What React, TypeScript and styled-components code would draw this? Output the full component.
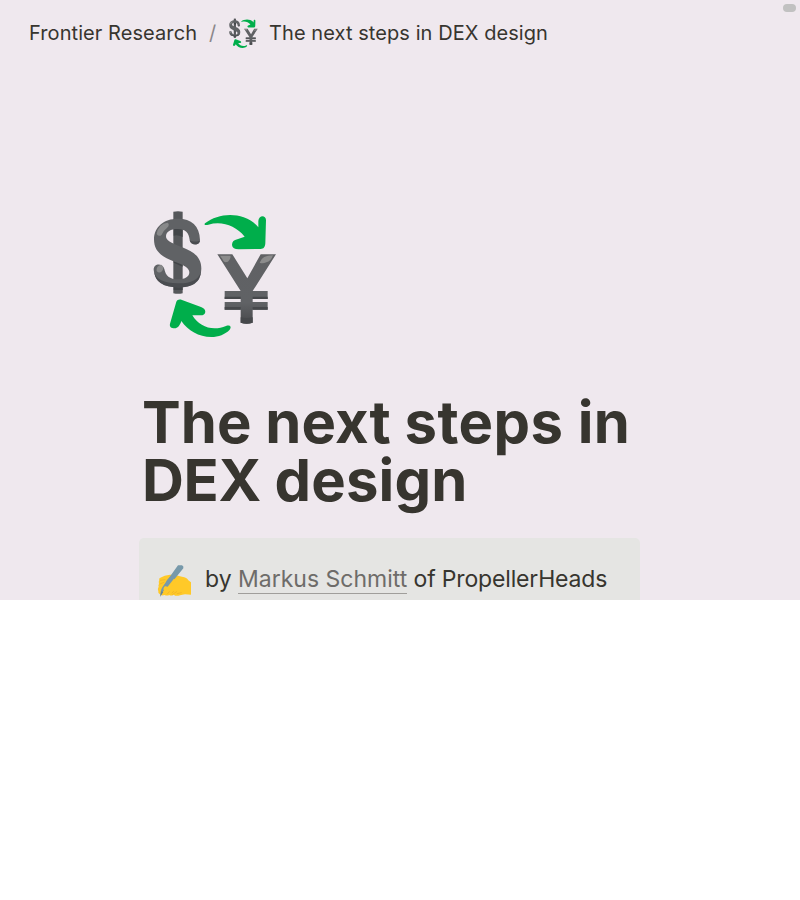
import React from "react";
import styled, { createGlobalStyle } from "styled-components";

const GlobalStyle = createGlobalStyle`
  * { box-sizing: border-box; }
  body { margin: 0; background: #fff; font-family: Inter, sans-serif; color: #37352f; }
`;

const Page = styled.main`
  position: relative;
  width: 800px;
  height: 600px;
  overflow: hidden;
  background: #efe8ee;
`;

const ScrollThumb = styled.div`
  position: absolute;
  top: 4px;
  right: 4px;
  width: 13px;
  height: 8px;
  border-radius: 4px;
  background: #c1c1c1;
`;

const Breadcrumb = styled.nav`
  display: flex;
  align-items: center;
  height: 66px;
  padding-left: 29px;
  font-size: 20px;
  line-height: 24px;
  white-space: nowrap;
`;

const Crumb = styled.span<{ $width: number }>`
  width: ${({ $width }) => $width}px;
  letter-spacing: 0.075px;
`;

const Slash = styled.span`
  width: 18px;
  margin: 0 0 0 12px;
  color: #8b878a;
`;

const CrumbIcon = styled.span`
  display: flex;
  width: 43px;
  margin-left: -1px;
`;

const Content = styled.article`
  width: 501px;
  margin: 134px 0 0 139px;
`;

const Cover = styled.div`
  height: 150px;
  padding-left: 1px;
`;

const Title = styled.h1`
  margin: 43px 0 29px 3px;
  font-size: 58px;
  line-height: 58px;
  font-weight: 700;
  white-space: nowrap;
`;

const TitleWords = styled.span<{ $tracking: number }>`
  letter-spacing: ${({ $tracking }) => $tracking}px;
`;

const Callout = styled.section`
  display: flex;
  align-items: flex-start;
  height: 100px;
  padding: 24px 0 0 18px;
  border-radius: 5px;
  background: #e5e5e3;
`;

const CalloutText = styled.p`
  margin: 0 0 0 12px;
  font-size: 23px;
  line-height: 34px;
  white-space: nowrap;
`;

const Affiliation = styled.span`
  letter-spacing: -0.17px;
`;

const AuthorLink = styled.a`
  display: inline-block;
  height: 32px;
  color: #6e6c69;
  border-bottom: 1px solid #a09e9b;
`;

function CurrencyIcon({ size, id }: { size: number; id: string }) {
  return (
    <svg width={size} height={size} viewBox="0 0 450 450" aria-hidden="true">
      <defs>
        <linearGradient id={id} x1="0" y1="0" x2="0" y2="1">
          <stop offset="0" stopColor="#606164" />
          <stop offset=".7" stopColor="#606265" />
          <stop offset="1" stopColor="#48494c" />
        </linearGradient>
      </defs>
      <path d="M100 35q14-3 28 0v245q-14 3-28 0z" fill="#55575a" />
      <path d="M101 82h27v29q-14-7-27-4zm0 75 27 12v31l-27-12zm0 100h27v13h-27z" fill="#424548" />
      <path d="M180 120C179 77 154 56 114 56c-43 0-72 25-72 62 0 38 25 53 62 67 29 11 44 19 44 32 0 13-12 21-33 21-27 0-38-11-42-31-5-19-32-18-32 2 2 34 29 53 74 53 44 0 69-20 69-56 0-36-24-51-59-65-34-13-47-20-47-32 0-14 14-22 35-22 23 0 34 11 36 33 2 18 31 18 31 0z" fill="#606265" />
      <path d="M43 216q7 33 70 34 60 1 70-35-3 47-68 47-68 0-72-46zM149 121q10 7 31 1-2 11-15 11-12-1-16-12z" fill="#4a4c50" />
      <path d="M50 102q5-31 33-34 8 6-3 17-12 9-15 19-8 8-15-2zm0 111q-2-16 14-19 11 8 2 20-9 8-16-1z" fill="#88898a" />
      <path d="M232 163h45l45 72 40-72h46l-70 110h45v24h-45v9h45v23h-45v39q-18 6-36 0v-39h-48v-23h48v-9h-48v-24h48z" fill={`url(#${id})`} />
      <path d="M254 290h48v7h-48zm84 0h45v7h-45zm-84 31h48v8h-48zm84 0h45v8h-45zM302 352q18 4 36 0v16q-18 6-36 0z" fill="#46484b" />
      <path d="M240 167h31q3 8-7 18-13 5-17-8zm119 21q7-22 40-22-6 18-20 21-11 5-20 1z" fill="#8c8c8c" />
      <path d="M195 70c31-24 77-32 116-18 20 7 34 18 44 30V63c1-18 22-19 23-3l-2 70c-1 12-5 17-14 17l-66 1c-12 0-19-4-20-13 0-10 6-15 16-17l22-8c-27-33-68-48-109-36-9 3-14 0-10-4z" fill="#00ae4b" />
      <path d="M109 305c3-6 9-8 17-5l57 21c9 4 13 8 13 15-1 7-6 10-14 10h-25c15 25 39 39 67 39 12 0 23-3 34-7 12-4 18 3 11 11-13 14-34 22-55 22-38 0-70-19-90-48-4 14-12 22-20 22-11 0-16-5-14-14z" fill="#00ae4b" />
    </svg>
  );
}

function WritingHand() {
  return (
    <svg width="36" height="36" viewBox="81 96 108 108" aria-hidden="true">
      <path d="M88 150q-3-4 3-7 12-8 29-9h12l24 6q15 2 19 11l8 6v37l-18-1q-8 2-15 3-12 4-19-2-7 5-13 1-8 3-14 0-12 3-14-2-7-3-5-9-3-9 1-14-2-4 1-8-2-7 1-12z" fill="#ffc928" />
      <path d="m91 151 14-2m-15 13 12-5m24 32 5-5m-19 8 6-7m10 8 12-8m2 6 12-3" fill="none" stroke="#efb126" strokeWidth="2.2" strokeLinecap="round" />
      <path d="m144 106 12 0q6 3 4 9l-48 59-12 9-8 14q-3-13 6-27z" fill="#7799aa" />
      <path d="m94 184 6 2-10 15z" fill="#688490" />
      <path d="m131 145 8 8-20 23q-12 12-18 5-3-7 7-15z" fill="#ffc928" />
      <path d="m111 150 15-14 8 7-21 27-10-2z" fill="#7799aa" />
    </svg>
  );
}

export default function App() {
  return (
    <>
      <GlobalStyle />
      <Page>
        <ScrollThumb />
        <Breadcrumb>
          <Crumb $width={168}>Frontier Research</Crumb>
          <Slash>/</Slash>
          <CrumbIcon><CurrencyIcon size={35} id="crumb-yen" /></CrumbIcon>
          <Crumb $width={280}>The next steps in DEX design</Crumb>
        </Breadcrumb>
        <Content>
          <Cover><CurrencyIcon size={150} id="cover-yen" /></Cover>
          <Title>
            <TitleWords $tracking={0.05}>The next </TitleWords>
            <TitleWords $tracking={0.45}>steps in</TitleWords>
            <br />
            <TitleWords $tracking={-0.3}>DEX </TitleWords>
            <TitleWords $tracking={0.15}>design</TitleWords>
          </Title>
          <Callout>
            <WritingHand />
            <CalloutText>by <AuthorLink>Markus Schmitt</AuthorLink><Affiliation> of PropellerHeads</Affiliation></CalloutText>
          </Callout>
        </Content>
      </Page>
    </>
  );
}
